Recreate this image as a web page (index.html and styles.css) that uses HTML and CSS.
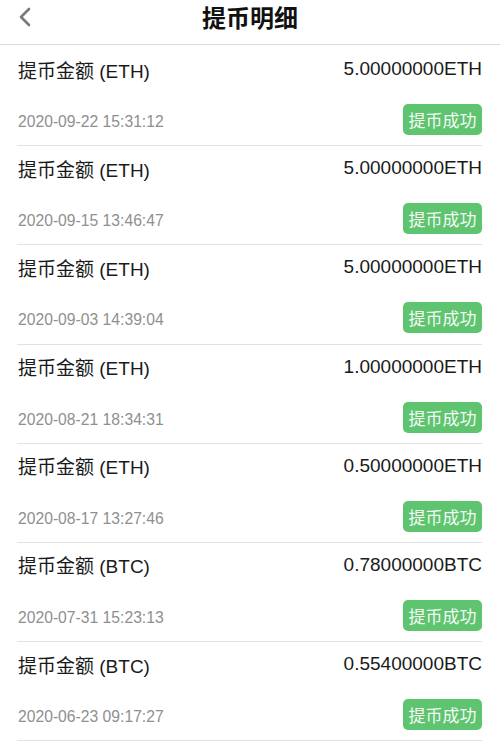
FILE: index.html
```html
<!DOCTYPE html>
<html lang="zh-CN">
<head>
  <meta charset="UTF-8">
  <meta name="viewport" content="width=device-width, initial-scale=1.0">
  <title>提币明细</title>
  <link rel="stylesheet" href="styles.css">
</head>
<body>

<div class="header">
  <span class="back">
    <svg width="14" height="20" viewBox="0 0 14 20"><path d="M11 2 L3 10 L11 18" fill="none" stroke="#7a7a7a" stroke-width="2.6" stroke-linecap="round" stroke-linejoin="round"/></svg>
  </span>
  <h1 class="title">提币明细</h1>
</div>

<ul class="record-list">
  <li class="record">
    <div class="record-top"><span class="label">提币金额 (ETH)</span><span class="amount">5.00000000ETH</span></div>
    <div class="record-bottom"><span class="time">2020-09-22 15:31:12</span><span class="status">提币成功</span></div>
  </li>
  <li class="record">
    <div class="record-top"><span class="label">提币金额 (ETH)</span><span class="amount">5.00000000ETH</span></div>
    <div class="record-bottom"><span class="time">2020-09-15 13:46:47</span><span class="status">提币成功</span></div>
  </li>
  <li class="record">
    <div class="record-top"><span class="label">提币金额 (ETH)</span><span class="amount">5.00000000ETH</span></div>
    <div class="record-bottom"><span class="time">2020-09-03 14:39:04</span><span class="status">提币成功</span></div>
  </li>
  <li class="record">
    <div class="record-top"><span class="label">提币金额 (ETH)</span><span class="amount">1.00000000ETH</span></div>
    <div class="record-bottom"><span class="time">2020-08-21 18:34:31</span><span class="status">提币成功</span></div>
  </li>
  <li class="record">
    <div class="record-top"><span class="label">提币金额 (ETH)</span><span class="amount">0.50000000ETH</span></div>
    <div class="record-bottom"><span class="time">2020-08-17 13:27:46</span><span class="status">提币成功</span></div>
  </li>
  <li class="record">
    <div class="record-top"><span class="label">提币金额 (BTC)</span><span class="amount">0.78000000BTC</span></div>
    <div class="record-bottom"><span class="time">2020-07-31 15:23:13</span><span class="status">提币成功</span></div>
  </li>
  <li class="record">
    <div class="record-top"><span class="label">提币金额 (BTC)</span><span class="amount">0.55400000BTC</span></div>
    <div class="record-bottom"><span class="time">2020-06-23 09:17:27</span><span class="status">提币成功</span></div>
  </li>
</ul>

</body>
</html>
```
FILE: styles.css
```css
body { margin: 0; background: #fff; font-family: "Liberation Sans", "Noto Sans CJK SC", sans-serif; color: #1a1a1a; overflow: hidden; }

/* top bar */
.header { position: relative; height: 44px; border-bottom: 1px solid #d9d9d9; text-align: center; }
.back { position: absolute; left: 18px; top: 7px; }
.title { margin: 0; font-size: 24px; line-height: 34px; font-weight: bold; color: #111; font-family: "Noto Sans CJK SC", sans-serif; }

/* records */
.record-list { list-style: none; margin: 0; padding: 2px 0 0; }
.record { margin: 0 18px 0 17px; padding: 10px 0 10.2px 1px; border-bottom: 1px solid #e2e2e2; }
.record-top { display: flex; justify-content: space-between; align-items: center; height: 24px; font-size: 19px; }
.record-bottom { display: flex; justify-content: space-between; align-items: center; height: 31px; margin-top: 23px; }
.time { font-size: 15.7px; color: #8f8f8f; padding-top: 5px; }
.status { width: 79px; height: 31px; line-height: 31px; text-align: center; border-radius: 5px; background: #5ec46f; color: #f4fbf4; font-size: 17px; font-family: "Noto Sans CJK SC", sans-serif; }
```
